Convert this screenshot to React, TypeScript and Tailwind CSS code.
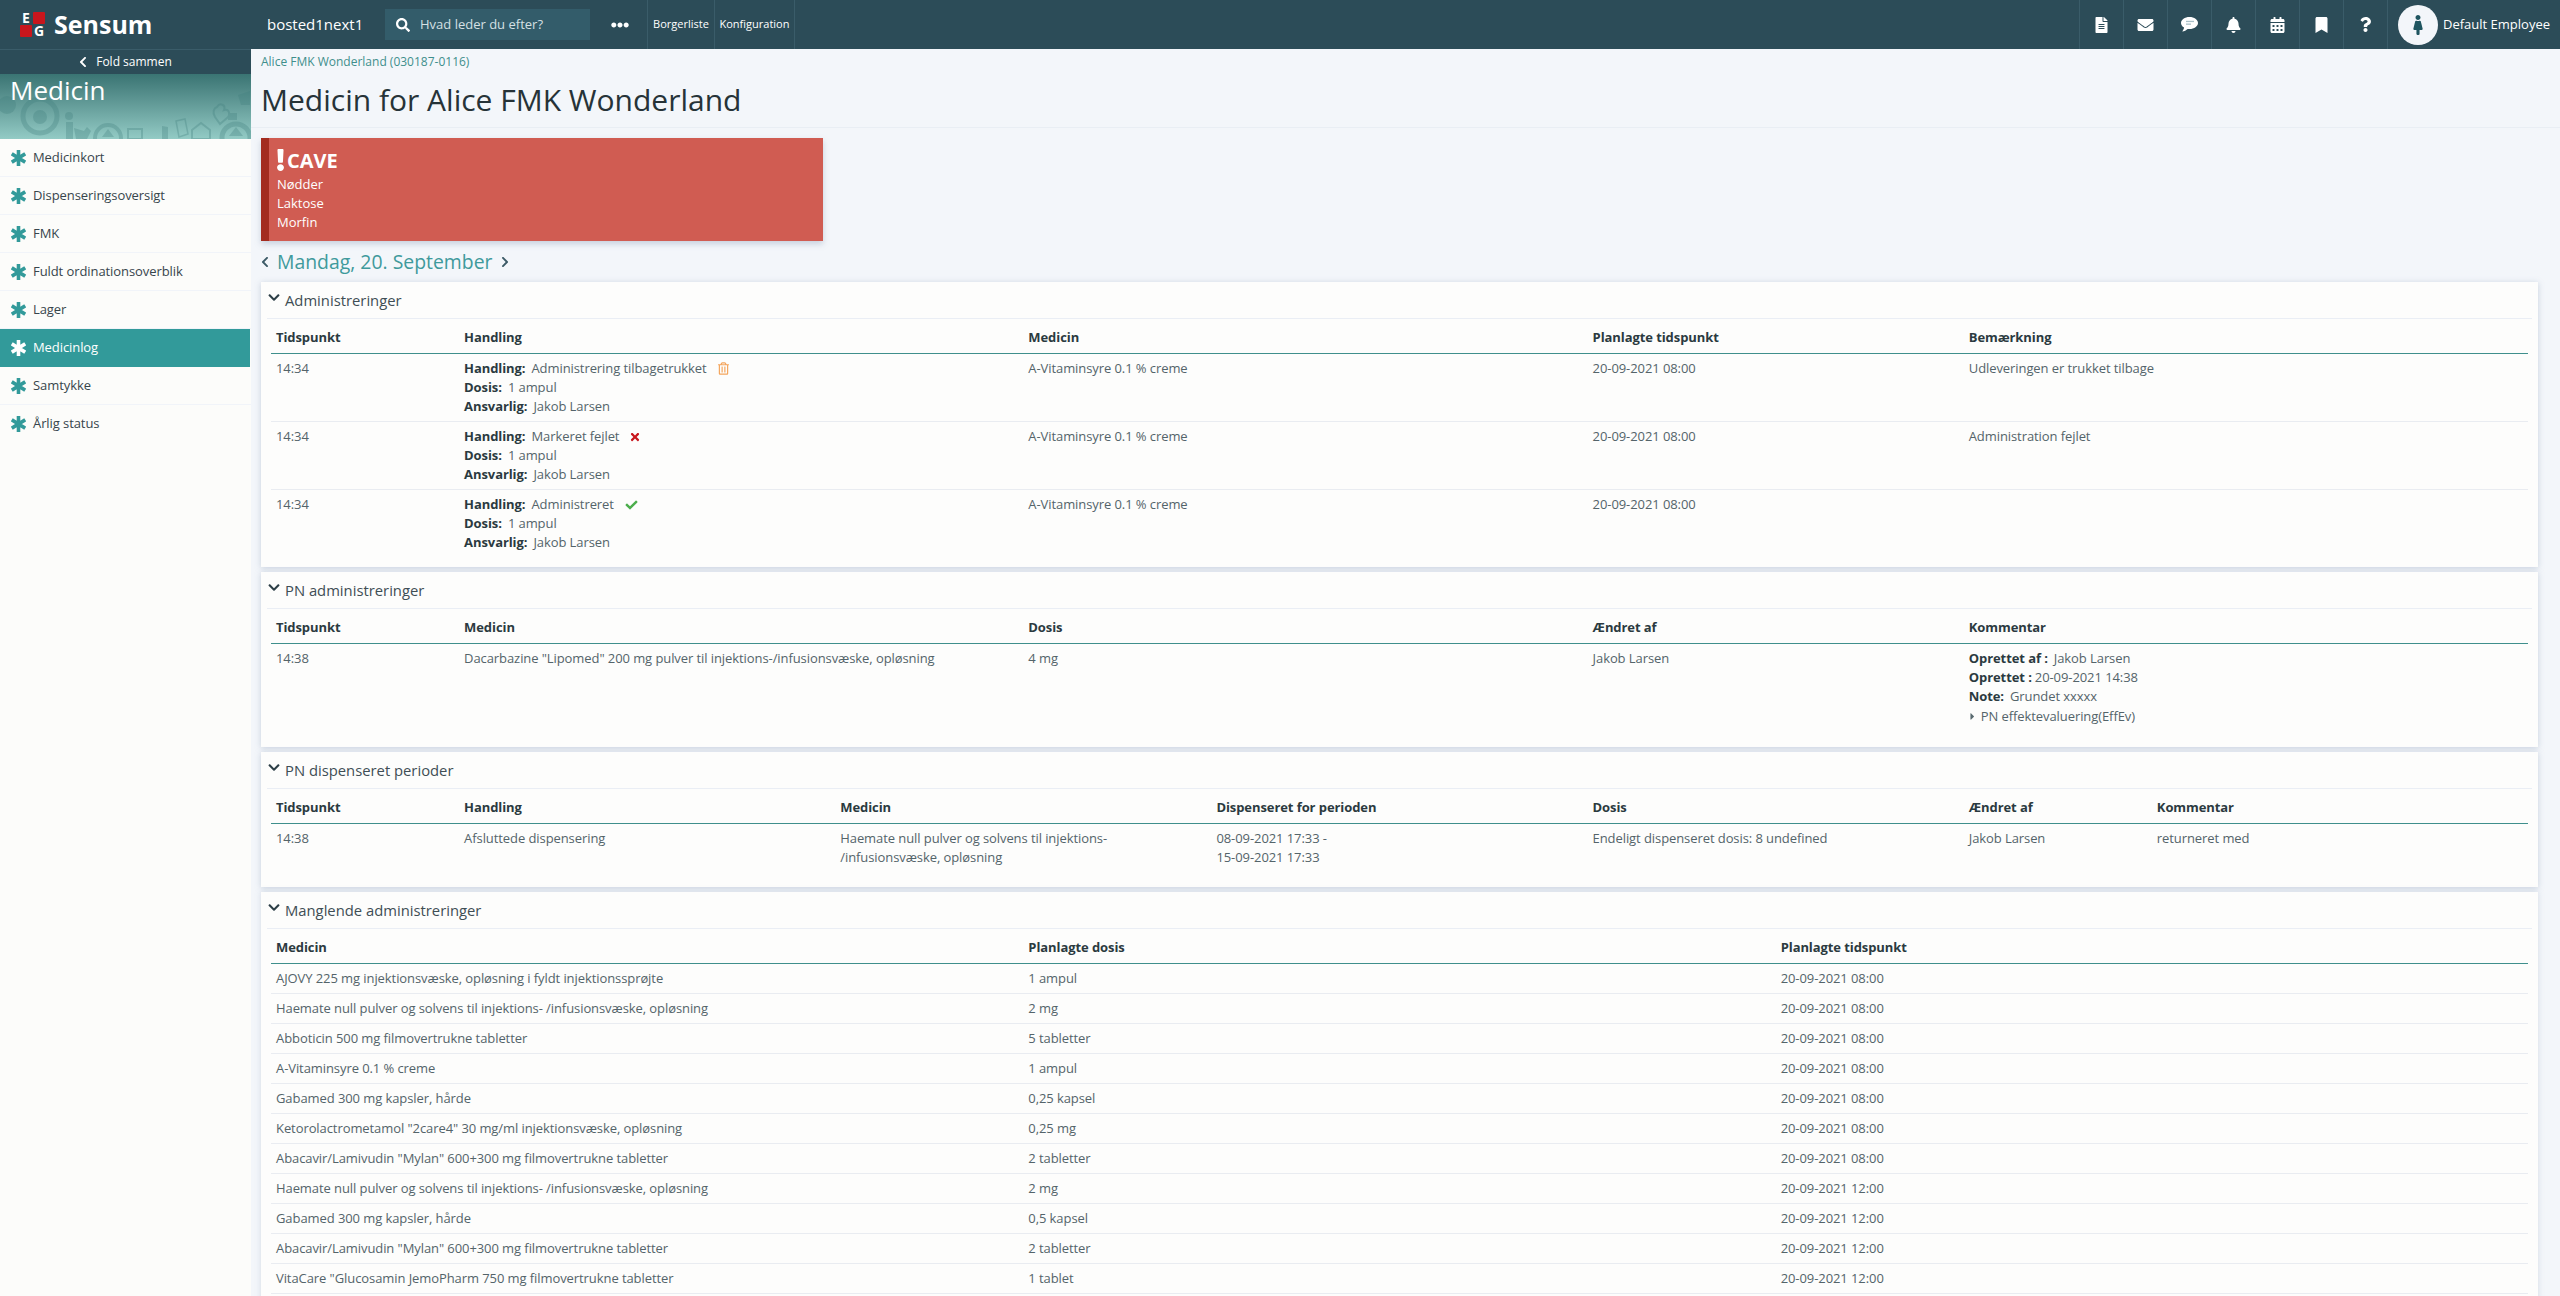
import type { ReactNode } from "react";
import {
	FaBell,
	FaBookmark,
	FaCalendarAlt,
	FaCaretRight,
	FaCheck,
	FaChevronDown,
	FaChevronLeft,
	FaChevronRight,
	FaEllipsisH,
	FaEnvelope,
	FaExclamation,
	FaFemale,
	FaFileAlt,
	FaQuestion,
	FaRegTrashAlt,
	FaSearch,
	FaTimes,
} from "react-icons/fa";

const MENU = ["Medicinkort", "Dispenseringsoversigt", "FMK", "Fuldt ordinationsoverblik", "Lager", "Medicinlog", "Samtykke", "Årlig status"];

const SPANS: Record<number, string> = {
	1: "col-span-1",
	2: "col-span-2",
	3: "col-span-3",
	4: "col-span-4",
};

const MISSING = [
	["AJOVY 225 mg injektionsvæske, opløsning i fyldt injektionssprøjte", "1 ampul", "20-09-2021 08:00"],
	["Haemate null pulver og solvens til injektions- /infusionsvæske, opløsning", "2 mg", "20-09-2021 08:00"],
	["Abboticin 500 mg filmovertrukne tabletter", "5 tabletter", "20-09-2021 08:00"],
	["A-Vitaminsyre 0.1 % creme", "1 ampul", "20-09-2021 08:00"],
	["Gabamed 300 mg kapsler, hårde", "0,25 kapsel", "20-09-2021 08:00"],
	['Ketorolactrometamol "2care4" 30 mg/ml injektionsvæske, opløsning', "0,25 mg", "20-09-2021 08:00"],
	['Abacavir/Lamivudin "Mylan" 600+300 mg filmovertrukne tabletter', "2 tabletter", "20-09-2021 08:00"],
	["Haemate null pulver og solvens til injektions- /infusionsvæske, opløsning", "2 mg", "20-09-2021 12:00"],
	["Gabamed 300 mg kapsler, hårde", "0,5 kapsel", "20-09-2021 12:00"],
	['Abacavir/Lamivudin "Mylan" 600+300 mg filmovertrukne tabletter', "2 tabletter", "20-09-2021 12:00"],
	['VitaCare "Glucosamin JemoPharm 750 mg filmovertrukne tabletter', "1 tablet", "20-09-2021 12:00"],
];

function Logo() {
	return (
		<div className="grid h-[25px] w-[25px] shrink-0 grid-cols-2 gap-[1px] text-center text-[14px] font-bold leading-[12px] text-white">
			<div>E</div>
			<div className="rounded-[1px] bg-[#c8161d]" />
			<div className="rounded-[1px] bg-[#c8161d]" />
			<div>G</div>
		</div>
	);
}

function ChatIcon() {
	return (
		<svg width="17" height="15" viewBox="0 0 17 15">
			<path d="M8.5 0C3.8 0 0 2.7 0 6c0 1.900 1.200 3.500 3.100 4.600C2.900 12 2.200 13.200 1.200 14.500c2.200-.3 4.200-1.400 5.500-2.600.6.100 1.200.1 1.800.1 4.700 0 8.500-2.700 8.500-6s-3.800-6-8.500-6z" fill="#fff" />
			<rect x="5" y="3.800" width="8" height="1.300" fill="#a9c0c8" />
			<rect x="5" y="6.500" width="5" height="1.300" fill="#a9c0c8" />
		</svg>
	);
}

function StarIcon({ className }: { className: string }) {
	return (
		<svg width="15" height="16" viewBox="0 0 15 16" className={className} fill="none" stroke="currentColor" strokeWidth="3.600">
			<path d="M7.500 0v16M.8 3.800l13.400 8.400M14.200 3.800L.8 12.200" />
		</svg>
	);
}

function TopIcon({ children }: { children: ReactNode }) {
	return <div className="flex h-[49px] w-[44px] items-center justify-center border-l border-[#3a5c69] text-white">{children}</div>;
}

function Header() {
	return (
		<header className="flex h-[49px] items-stretch bg-[#2c4c58] text-white">
			<div className="flex w-[267px] shrink-0 items-center pl-5">
				<Logo />
				<span className="ml-[9px] text-[25px] font-bold leading-none">Sensum</span>
			</div>
			<div className="flex w-[118px] shrink-0 items-center text-[15px]">bosted1next1</div>
			<div className="my-[9px] flex w-[205px] shrink-0 items-center bg-[#335c6a] pl-[11px]">
				<FaSearch className="h-[14px] w-[14px] text-white" />
				<span className="ml-[10px] text-[13px] text-[#d5e0e4]">Hvad leder du efter?</span>
			</div>
			<div className="flex w-[57px] shrink-0 items-center justify-center pl-[2px]">
				<FaEllipsisH className="h-[18px] w-[18px] text-white" />
			</div>
			<div className="flex w-[67px] shrink-0 items-center justify-center border-l border-[#3a5c69] text-[11px]">Borgerliste</div>
			<div className="flex w-[81px] shrink-0 items-center justify-center border-x border-[#3a5c69] text-[11px]">Konfiguration</div>
			<div className="ml-auto flex">
				<TopIcon>
					<FaFileAlt className="h-[16px] w-[13px]" />
				</TopIcon>
				<TopIcon>
					<FaEnvelope className="h-[16px] w-[17px]" />
				</TopIcon>
				<TopIcon>
					<ChatIcon />
				</TopIcon>
				<TopIcon>
					<FaBell className="h-[16px] w-[15px]" />
				</TopIcon>
				<TopIcon>
					<FaCalendarAlt className="h-[16px] w-[15px]" />
				</TopIcon>
				<TopIcon>
					<FaBookmark className="h-[16px] w-[13px]" />
				</TopIcon>
				<TopIcon>
					<FaQuestion className="h-[15px] w-[13px]" />
				</TopIcon>
				<div className="flex w-[173px] items-center border-l border-[#3a5c69] pl-[10px]">
					<div className="flex h-[40px] w-[40px] shrink-0 items-center justify-center rounded-full bg-[#f3f6fa]">
						<FaFemale className="h-[20px] w-[20px] text-[#1f5560]" />
					</div>
					<span className="ml-[5px] whitespace-nowrap text-[13px]">Default Employee</span>
				</div>
			</div>
		</header>
	);
}

// Faint pictogram pattern behind the section title
function BannerPattern() {
	return (
		<svg className="absolute inset-0" width="251" height="65" viewBox="0 0 251 65">
			<g fill="#3f7d7c" opacity="0.3">
				<circle cx="7" cy="31" r="9" />
				<circle cx="40" cy="42" r="17" fill="none" stroke="#3f7d7c" strokeWidth="5" />
				<circle cx="40" cy="43" r="7" />
				<circle cx="69" cy="42" r="4" />
				<rect x="66" y="48" width="7" height="17" />
				<path d="M74 54l10 3 3-4 4 4-4 8H76z" />
				<circle cx="108" cy="64" r="13" fill="none" stroke="#3f7d7c" strokeWidth="4" />
				<path d="M108 55l6 8h-12z" />
				<path d="M128 55h14v10h-14z" fill="none" stroke="#3f7d7c" strokeWidth="2" />
				<path d="M162 52l6 1v12h-6z" />
				<path d="M176 47l9-2 3 15-9 3z" fill="none" stroke="#3f7d7c" strokeWidth="1.500" />
				<path d="M192 56l9-7 9 7v9h-18z" fill="none" stroke="#3f7d7c" strokeWidth="2" />
				<path d="M217 33c3-5 9-2 7 3 5-2 7 5 3 8l-7 6-5-7c-3-5-1-9 2-10z" fill="none" stroke="#3f7d7c" strokeWidth="2" />
				<circle cx="236" cy="64" r="14" fill="none" stroke="#3f7d7c" strokeWidth="5" />
				<path d="M236 53l7 9h-14z" />
				<path d="M238 21l12-4v14h-9z" />
				<path d="M228 39h9v7h-9z" />
			</g>
		</svg>
	);
}

function Sidebar() {
	return (
		<aside className="w-[251px] shrink-0 self-stretch bg-[#fcfcfa]">
			<div className="flex h-[25px] items-center justify-center border-t border-[#3a5c69] bg-[#2c4c58] text-[12px] text-white">
				<FaChevronLeft className="mr-[9px] h-[12px] w-[8px]" />
				Fold sammen
			</div>
			<div className="relative h-[65px] bg-gradient-to-b from-[#3a7473] to-[#93cbc5]">
				<BannerPattern />
				<div className="relative pl-[10px] text-[26px] leading-[32px] text-white">Medicin</div>
			</div>
			<nav>
				{MENU.map((item) => {
					const active = item === "Medicinlog";
					return (
						<div
							key={item}
							className={
								active
									? "flex h-[38px] w-[250px] items-center bg-[#329a9a] pl-[11px] text-[13px] tracking-[-0.08px] text-white"
									: "flex h-[38px] items-center border-b border-[#f1f4f9] pl-[11px] text-[13px] tracking-[-0.08px] text-[#37454c] last:border-b-0"
							}>
							<StarIcon className={active ? "mr-[7px] text-white" : "mr-[7px] text-[#329a9a]"} />
							{item}
						</div>
					);
				})}
			</nav>
		</aside>
	);
}

function Card({ title, last, children }: { title: string; last?: boolean; children: ReactNode }) {
	return (
		<section className={last ? "bg-[#fdfdfc] shadow-[0_0_6px_rgba(120,140,170,0.25)]" : "mb-[5px] bg-[#fdfdfc] shadow-[0_1px_6px_rgba(120,140,170,0.35)]"}>
			<div className="mx-[6px] flex h-[37px] items-center border-b border-[#eaeef5] text-[14.800px] text-[#3f4e55]">
				<FaChevronDown className="mb-[5px] ml-[1px] mr-[5px] h-[13px] w-[12px] text-[#2c3e46]" />
				{title}
			</div>
			{children}
		</section>
	);
}

function HeadRow({ cols }: { cols: [string, number][] }) {
	return (
		<div className="mx-[10px] grid h-[35px] grid-cols-12 items-center border-b border-[#3f8f8c] pt-[4px] text-[13px] font-bold tracking-[-0.08px] text-[#2b3a40]">
			{cols.map(([label, span]) => (
				<div key={label} className={`${SPANS[span]} px-[5px]`}>
					{label}
				</div>
			))}
		</div>
	);
}

function Label({ children }: { children: ReactNode }) {
	return <b className="mr-[6px] font-bold text-[#2b3a40]">{children}</b>;
}

function AdminRow({ action, icon, medicine, note, border }: { action: string; icon: ReactNode; medicine: string; note?: string; border?: boolean }) {
	return (
		<div className={border ? "mx-[10px] grid grid-cols-12 border-b border-[#e9ecf1] py-[5px] text-[13px] leading-[19px] tracking-[-0.08px] text-[#54646a]" : "mx-[10px] grid grid-cols-12 py-[5px] text-[13px] leading-[19px] tracking-[-0.08px] text-[#54646a]"}>
			<div className="col-span-1 px-[5px]">14:34</div>
			<div className="col-span-3 px-[5px]">
				<div className="flex items-center">
					<Label>Handling:</Label>
					{action}
					{icon}
				</div>
				<div>
					<Label>Dosis:</Label>1 ampul
				</div>
				<div>
					<Label>Ansvarlig:</Label>Jakob Larsen
				</div>
			</div>
			<div className="col-span-3 px-[5px]">{medicine}</div>
			<div className="col-span-2 px-[5px]">20-09-2021 08:00</div>
			<div className="col-span-3 px-[5px]">{note}</div>
		</div>
	);
}

function Main() {
	return (
		<main className="min-w-0 flex-1 pl-[10px] pr-[22px]">
			<div className="pt-[4px] text-[12px] leading-[18px] text-[#3f8f8c]">Alice FMK Wonderland (030187-0116)</div>
			<div className="-ml-[10px] -mr-[22px] border-b border-[#e9eef4] pb-[7px] pl-[10px] pt-[9px] text-[30px] leading-[40px] text-[#263338]">Medicin for Alice FMK Wonderland</div>

			<div className="mt-[10px] h-[103px] w-[562px] border-l-[8px] border-[#a32c20] bg-[#d05c52] pl-[8px] pt-[9px] text-[13px] leading-[19px] text-white shadow-[0_3px_6px_rgba(120,140,170,0.35)]">
				<div className="mb-[2px] flex h-[26px] items-center text-[20px] font-bold">
					<FaExclamation className="-ml-[1px] mr-[2px] h-[22px] w-[9px]" />
					CAVE
				</div>
				<div>Nødder</div>
				<div>Laktose</div>
				<div>Morfin</div>
			</div>

			<div className="flex h-[41px] items-center text-[19.400px] text-[#3f9a9c]">
				<FaChevronLeft className="mr-[8px] h-[12px] w-[8px] text-[#3c5a66]" />
				Mandag, 20. September
				<FaChevronRight className="ml-[9px] h-[12px] w-[8px] text-[#3c5a66]" />
			</div>

			<Card title="Administreringer">
				<HeadRow cols={[["Tidspunkt", 1], ["Handling", 3], ["Medicin", 3], ["Planlagte tidspunkt", 2], ["Bemærkning", 3]]} />
				<div className="pb-[10px]">
					<AdminRow border action="Administrering tilbagetrukket" icon={<FaRegTrashAlt className="ml-[11px] h-[13px] w-[11px] text-[#f4a55c]" />} medicine="A-Vitaminsyre 0.1 % creme" note="Udleveringen er trukket tilbage" />
					<AdminRow border action="Markeret fejlet" icon={<FaTimes className="ml-[11px] h-[12px] w-[10px] text-[#c8161d]" />} medicine="A-Vitaminsyre 0.1 % creme" note="Administration fejlet" />
					<AdminRow action="Administreret" icon={<FaCheck className="ml-[11px] h-[12px] w-[13px] text-[#4cae4c]" />} medicine="A-Vitaminsyre 0.1 % creme" />
				</div>
			</Card>

			<Card title="PN administreringer">
				<HeadRow cols={[["Tidspunkt", 1], ["Medicin", 3], ["Dosis", 3], ["Ændret af", 2], ["Kommentar", 3]]} />
				<div className="mx-[10px] grid grid-cols-12 pb-[21px] pt-[5px] text-[13px] leading-[19px] tracking-[-0.08px] text-[#54646a]">
					<div className="col-span-1 px-[5px]">14:38</div>
					<div className="col-span-3 px-[5px]">Dacarbazine "Lipomed" 200 mg pulver til injektions-/infusionsvæske, opløsning</div>
					<div className="col-span-3 px-[5px]">4 mg</div>
					<div className="col-span-2 px-[5px]">Jakob Larsen</div>
					<div className="col-span-3 px-[5px]">
						<div>
							<Label>Oprettet af :</Label>Jakob Larsen
						</div>
						<div>
							<b className="mr-[3px] font-bold text-[#2b3a40]">Oprettet :</b>20-09-2021 14:38
						</div>
						<div>
							<Label>Note:</Label>Grundet xxxxx
						</div>
						<div className="flex h-[20px] items-center">
							<FaCaretRight className="mr-[5px] h-[11px] w-[7px] text-[#5a6a70]" />
							PN effektevaluering(EffEv)
						</div>
					</div>
				</div>
			</Card>

			<Card title="PN dispenseret perioder">
				<HeadRow cols={[["Tidspunkt", 1], ["Handling", 2], ["Medicin", 2], ["Dispenseret for perioden", 2], ["Dosis", 2], ["Ændret af", 1], ["Kommentar", 2]]} />
				<div className="mx-[10px] grid grid-cols-12 pb-[20px] pt-[5px] text-[13px] leading-[19px] tracking-[-0.08px] text-[#54646a]">
					<div className="col-span-1 px-[5px]">14:38</div>
					<div className="col-span-2 px-[5px]">Afsluttede dispensering</div>
					<div className="col-span-2 px-[5px]">
						Haemate null pulver og solvens til injektions-
						<br />
						/infusionsvæske, opløsning
					</div>
					<div className="col-span-2 px-[5px]">
						08-09-2021 17:33 -
						<br />
						15-09-2021 17:33
					</div>
					<div className="col-span-2 px-[5px]">Endeligt dispenseret dosis: 8 undefined</div>
					<div className="col-span-1 px-[5px]">Jakob Larsen</div>
					<div className="col-span-2 px-[5px]">returneret med</div>
				</div>
			</Card>

			<Card title="Manglende administreringer" last>
				<HeadRow cols={[["Medicin", 4], ["Planlagte dosis", 4], ["Planlagte tidspunkt", 4]]} />
				{MISSING.map((row, i) => (
					<div key={i} className="mx-[10px] grid h-[30px] grid-cols-12 items-center border-b border-[#e9ecf1] text-[13px] tracking-[-0.08px] text-[#54646a]">
						<div className="col-span-4 px-[5px]">{row[0]}</div>
						<div className="col-span-4 px-[5px]">{row[1]}</div>
						<div className="col-span-4 px-[5px]">{row[2]}</div>
					</div>
				))}
				<div className="h-[40px]" />
			</Card>
		</main>
	);
}

export default function App() {
	return (
		<div className="h-screen overflow-hidden bg-[#f3f6fa] font-['Open_Sans',sans-serif]">
			<Header />
			<div className="flex">
				<Sidebar />
				<Main />
			</div>
		</div>
	);
}
